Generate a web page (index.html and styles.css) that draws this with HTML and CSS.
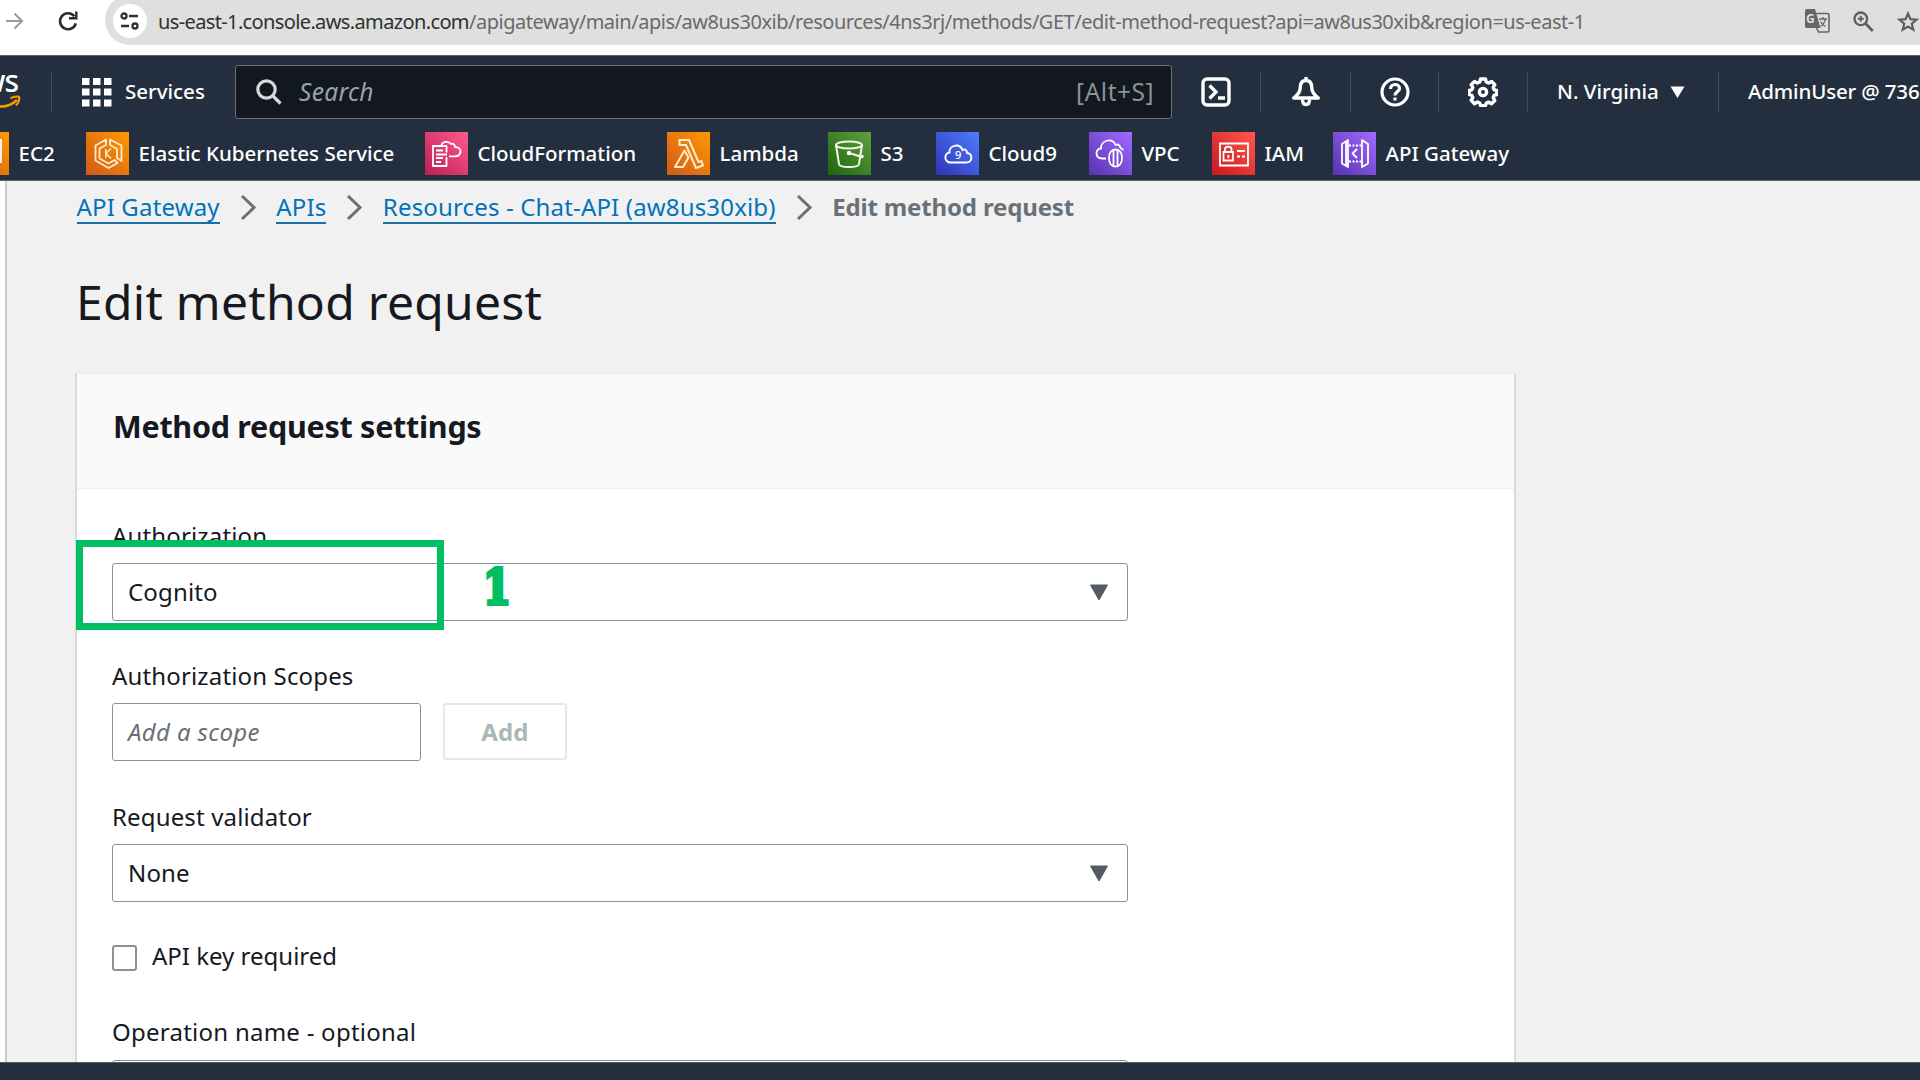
FILE: index.html
```html
<!DOCTYPE html>
<html lang="en">
<head>
<meta charset="utf-8">
<title>Edit method request - API Gateway</title>
<link rel="stylesheet" href="styles.css">
</head>
<body>
<div class="browser">
  <svg class="forward" width="18" height="18" viewBox="0 0 18 18" fill="none" stroke="#9b9b9b" stroke-width="2"><path d="M0 9h16M8.500 1.500L16 9l-7.500 7.500"/></svg>
  <svg class="reload" width="20" height="20" viewBox="0 0 20 20" fill="none" stroke="#2b2b2b" stroke-width="2.600"><path d="M16.300 5.200A8 8 0 1 0 17.800 12.300"/><path d="M18.300 .5V7.300H11" stroke-width="2.400"/></svg>
  <div class="omnibox">
    <span class="site-info"><svg width="20" height="18" viewBox="0 0 20 18" fill="none" stroke="#2f3033" stroke-width="2.300"><circle cx="4" cy="4" r="2.500"/><path d="M9 4h9M1 14h8"/><circle cx="15" cy="14" r="2.500"/></svg></span>
    <span class="url"><span class="host">us-east-1.console.aws.amazon.com</span>/apigateway/main/apis/aw8us30xib/resources/4ns3rj/methods/GET/edit-method-request?api=aw8us30xib&amp;region=us-east-1</span>
    <span class="omni-icons">
      <svg width="25" height="24" viewBox="0 0 25 24"><path d="M2 0h8l5.500 19H2a2 2 0 0 1-2-2V2a2 2 0 0 1 2-2z" fill="#666"/><path d="M11 4.500h11.500a1.500 1.500 0 0 1 1.500 1.500v15.500a1.500 1.500 0 0 1-1.500 1.500H13.500l-2-4" fill="none" stroke="#666" stroke-width="1.600"/><text x="1" y="14" font-size="12" font-weight="700" fill="#dfdfdf">G</text><path d="M14 10h8M18 8v2M20.500 10c-.5 3-3 6-5 7.500M15.500 12.500c1.500 3 3 4 5 5" fill="none" stroke="#666" stroke-width="1.300"/></svg>
      <svg width="21" height="21" viewBox="0 0 21 21" fill="none" stroke="#5f5f5f" stroke-width="2.300"><circle cx="7.800" cy="7.800" r="6.300"/><path d="M12.300 12.300L19.800 20" stroke-width="2.800"/><path d="M4.800 7.800h6M7.800 4.800v6" stroke-width="1.900"/></svg>
      <svg width="22" height="21" viewBox="0 0 22 21" fill="none" stroke="#5f5f5f" stroke-width="2.200"><path d="M11 2.500l2.400 5.700 6.100.5-4.700 4 1.500 6L11 15.500l-5.300 3.200 1.500-6-4.700-4 6.100-.5z"/></svg>
    </span>
  </div>
</div>

<header class="console-nav">
  <div class="nav-row">
    <div class="cell logo">
      <span class="aws-text">aws</span>
      <svg width="22" height="14" viewBox="0 0 22 14" fill="none" stroke="#f90" stroke-width="2.600"><path d="M0 11.500C6 12 12 9.500 17 5"/><path d="M10.500 3.200C14 1.500 17 1.200 19 1.900c.8 2.500-.5 6-3 8.600" stroke-width="2.200"/></svg>
    </div>
    <div class="cell services">
      <svg width="30" height="30" viewBox="0 0 30 30" fill="#fff"><path d="M0 1h7.500v7H0zM11 1h7.500v7H11zM22 1h7.500v7H22zM0 11.500h7.500v7H0zM11 11.500h7.500v7H11zM22 11.500h7.500v7H22zM0 22.500h7.500v7H0zM11 22.500h7.500v7H11zM22 22.500h7.500v7H22z"/></svg>
      <span>Services</span>
    </div>
    <div class="search">
      <svg width="26" height="26" viewBox="0 0 26 26" fill="none" stroke="#d5dbdb" stroke-width="3.200"><circle cx="10.500" cy="10.500" r="8.700"/><path d="M16.500 16.500L24.500 24.500"/></svg>
      <span class="search-text">Search</span><span class="search-key">[Alt+S]</span>
    </div>
    <div class="cell tool"><svg width="30" height="30" viewBox="0 0 30 30" fill="none" stroke="#fff" stroke-width="3.400"><rect x="2" y="2" width="26" height="26" rx="4"/><path d="M8.500 8.500l6.500 6.500-6.500 6.500M17 21h7"/></svg></div>
    <div class="cell tool"><svg width="30" height="30" viewBox="0 0 30 30" fill="none" stroke="#fff" stroke-width="3.400" stroke-linejoin="round"><path d="M15 3.500c-4.200 0-5.800 3.200-5.800 7.500 0 4.500-2.500 7-6.500 10h24.600c-4-3-6.500-5.500-6.500-10 0-4.300-1.600-7.500-5.800-7.500zM15 0v4"/><path d="M11.500 22.500c0 3.500 1.500 5 3.500 5s3.500-1.500 3.500-5"/></svg></div>
    <div class="cell tool"><svg width="30" height="30" viewBox="0 0 30 30" fill="none" stroke="#fff" stroke-width="3.200"><circle cx="15" cy="15" r="13"/><path d="M10.500 12c0-2.800 1.900-4.500 4.500-4.500s4.500 1.600 4.500 4c0 3-4.500 3.300-4.500 7"/><path d="M15 20.500v3"/></svg></div>
    <div class="cell tool"><svg width="30" height="30" viewBox="0 0 30 30" fill="none" stroke="#fff" stroke-width="3.400" stroke-linejoin="round"><path d="M12.500 2h5l.8 3 2.400 1 2.900-1.600 3.200 3.300L25.200 10.500l1 2.300 2.600.7v4l-2.700.8-.9 2.300 1.600 2.900-3.300 3.200-2.900-1.600-2.300 1-.8 2.500h-5l-.8-2.600-2.300-1-2.900 1.700-3.300-3.300 1.600-2.800-1-2.300-2.600-.8v-4l2.600-.7 1-2.300L3.200 7.700l3.300-3.300L9.300 6l2.400-1z"/><circle cx="15" cy="15" r="3.600"/></svg></div>
    <div class="cell region"><span>N. Virginia</span><svg width="15" height="12" viewBox="0 0 15 12"><path d="M.5 .5h14L7.500 12z" fill="#fff"/></svg></div>
    <div class="user">AdminUser @ 736</div>
  </div>

  <nav class="favorites">
    <a class="fav"><svg width="43" height="43" viewBox="0 0 43 43" class="clipped"><rect width="43" height="43" fill="url(#orange)"/><path d="M10 8h25v22H10" fill="none" stroke="#fff" stroke-width="1.800"/></svg><span>EC2</span></a>
    <a class="fav"><svg width="43" height="43" viewBox="0 0 43 43"><rect width="43" height="43" fill="url(#orange)"/><g fill="none" stroke="#ffe9cc" stroke-width="1.800" stroke-linejoin="round"><path d="M20 7.500L9.500 13.500v15L22.500 36l9-5-3-3-6 3.500-9-5V16.500l6.500-3.500z"/><path d="M24 7.500v5.500l7 4v9l4.500 3V13.500z"/><path d="M19.800 17v9M25 16.500l-5 5 5 5" stroke-width="1.500"/></g></svg><span>Elastic Kubernetes Service</span></a>
    <a class="fav"><svg width="43" height="43" viewBox="0 0 43 43"><rect width="43" height="43" fill="url(#pink)"/><g fill="none" stroke="#fff" stroke-width="1.800" stroke-linejoin="round"><path d="M16 14H8v20h13.500V25M11 18.500h7M11 22.500h11M11 26h7M11 30h5"/><path d="M21.500 20.500V14H16M16.500 13c1-3.500 7-4.500 9.500-1 2-1 4 .5 4 3 3.500 0 6 2 5.500 5-.5 3-3 4.300-5.500 4.300h-6"/></g></svg><span>CloudFormation</span></a>
    <a class="fav"><svg width="43" height="43" viewBox="0 0 43 43"><rect width="43" height="43" fill="url(#orange)"/><g fill="none" stroke="#ffebcf" stroke-width="2" stroke-linejoin="round"><path d="M12.500 8h9.500l9.500 22 3-1 1.500 4.500-7 2.500L19 13h-6.500z"/><path d="M17.500 18.500L8 35h8l5.500-9.500z"/></g></svg><span>Lambda</span></a>
    <a class="fav"><svg width="43" height="43" viewBox="0 0 43 43"><rect width="43" height="43" fill="url(#green)"/><g fill="none" stroke="#eef7e8" stroke-width="2"><ellipse cx="21" cy="13" rx="13" ry="3.500"/><path d="M8 13l3 19c.5 4 19.500 4 20 0L34 13M21 21l11.500 3.500"/></g><circle cx="21" cy="21" r="2.200" fill="#fff"/><circle cx="34" cy="24.500" r="1.800" fill="#fff"/></svg><span>S3</span></a>
    <a class="fav"><svg width="43" height="43" viewBox="0 0 43 43"><rect width="43" height="43" fill="url(#blue)"/><path d="M15 30.500c-7 0-7.500-9-1.500-10-1-7 10-10 13-2.500 2-1.500 4.500 0 4.500 3 6 .5 6 9.500-1 9.500z" fill="none" stroke="#fff" stroke-width="1.900"/><text x="19" y="27" font-size="11" fill="#fff">9</text></svg><span>Cloud9</span></a>
    <a class="fav"><svg width="43" height="43" viewBox="0 0 43 43"><rect width="43" height="43" fill="url(#purple)"/><g fill="none" stroke="#fff" stroke-width="1.800"><path d="M17 26.500h-3.500C5 26 6.500 16 12 16.500c-.5-8 11-11.500 14.500-3.500 2.500-1.500 4.500.5 5 3l3 2"/><path d="M26.500 17.500c4 0 6.500 3.500 6.500 8.500s-2.500 8.500-6.500 8.500-6.500-3.500-6.500-8.500 2.500-8.500 6.500-8.500zM24.500 18v16M28.500 18v16"/></g></svg><span>VPC</span></a>
    <a class="fav"><svg width="43" height="43" viewBox="0 0 43 43"><rect width="43" height="43" fill="url(#red)"/><g fill="none" stroke="#fff" stroke-width="1.800"><path d="M8 11.500h28v22H8zM11.500 20h9.500v8.500h-9.500zM13 20v-3c0-3 6.500-3 6.500 0v3M25 19h8M25 24.500h3M30 24.500h3M16.300 23v3"/></g></svg><span>IAM</span></a>
    <a class="fav"><svg width="43" height="43" viewBox="0 0 43 43"><rect width="43" height="43" fill="url(#purple)"/><g fill="none" stroke="#fff" stroke-width="1.800" stroke-linejoin="round"><path d="M15 8v27l-6-3.500V12zM15 11h-2v22h2M29 8v27l6-3.500V12z"/><path d="M16 13.500h12M16 29.500h12" stroke-dasharray="2 1.500"/><path d="M24 17l-4.500 4.500L24 26"/></g></svg><span>API Gateway</span></a>
  </nav>
  <svg class="defs" width="0" height="0"><defs>
    <linearGradient id="orange" x1="0" y1="1" x2="1" y2="0"><stop stop-color="#d05a18"/><stop offset="1" stop-color="#f90"/></linearGradient>
    <linearGradient id="pink" x1="0" y1="1" x2="1" y2="0"><stop stop-color="#bd1f56"/><stop offset="1" stop-color="#ff5a8c"/></linearGradient>
    <linearGradient id="green" x1="0" y1="1" x2="1" y2="0"><stop stop-color="#1b660f"/><stop offset="1" stop-color="#629f3c"/></linearGradient>
    <linearGradient id="blue" x1="0" y1="1" x2="1" y2="0"><stop stop-color="#3033b5"/><stop offset="1" stop-color="#4d7dff"/></linearGradient>
    <linearGradient id="purple" x1="0" y1="1" x2="1" y2="0"><stop stop-color="#5733b0"/><stop offset="1" stop-color="#a06bff"/></linearGradient>
    <linearGradient id="red" x1="0" y1="1" x2="1" y2="0"><stop stop-color="#c9161e"/><stop offset="1" stop-color="#ff5a4f"/></linearGradient>
  </defs></svg>
</header>

<div class="page">
  <div class="side-edge"></div>
  <main class="content">
    <nav class="crumbs">
      <a>API Gateway</a>
      <svg width="17" height="27" viewBox="0 0 17 27"><path d="M2 2l12 11.500L2 25" fill="none" stroke="#687078" stroke-width="3"/></svg>
      <a>APIs</a>
      <svg width="17" height="27" viewBox="0 0 17 27"><path d="M2 2l12 11.500L2 25" fill="none" stroke="#687078" stroke-width="3"/></svg>
      <a>Resources - Chat-API (aw8us30xib)</a>
      <svg width="17" height="27" viewBox="0 0 17 27"><path d="M2 2l12 11.500L2 25" fill="none" stroke="#687078" stroke-width="3"/></svg>
      <b>Edit method request</b>
    </nav>
    <h1>Edit method request</h1>
    <section class="card">
      <h2>Method request settings</h2>
      <div class="form">
        <label>Authorization</label>
        <div class="control select authorization"><span>Cognito</span><svg width="20" height="17" viewBox="0 0 20 17"><path d="M1.500 1h17L10 16z" fill="#545b64" stroke="#545b64" stroke-linejoin="round"/></svg>
          <span class="highlight"></span><span class="step">1</span>
        </div>
        <label>Authorization Scopes</label>
        <div class="scopes"><div class="control scope">Add a scope</div><div class="add">Add</div></div>
        <label>Request validator</label>
        <div class="control select"><span>None</span><svg width="20" height="17" viewBox="0 0 20 17"><path d="M1.500 1h17L10 16z" fill="#545b64" stroke="#545b64" stroke-linejoin="round"/></svg></div>
        <div class="check"><span class="box"></span>API key required</div>
        <label class="operation">Operation name - optional</label>
        <div class="control"></div>
      </div>
    </section>
  </main>
</div>
<footer class="footer"></footer>
</body>
</html>
```
FILE: styles.css
```css
* { box-sizing: border-box; }
body {
  margin: 0;
  width: 1920px;
  height: 1080px;
  overflow: hidden;
  display: flex;
  flex-direction: column;
  font: 24px/32px "Noto Sans", "Open Sans", sans-serif;
  color: #16191f;
  background: #fff;
}
svg { flex: none; display: block; }

/* Browser toolbar */
.browser { height: 55px; flex: none; display: flex; align-items: flex-start; padding-left: 6px; background: #fff; }
.forward { margin-top: 12px; }
.reload { margin: 11px 0 0 34px; }
.omnibox {
  flex: 1;
  height: 50px;
  margin: -5px 0 0 27px;
  padding: 2px 0 0 8px;
  border-radius: 25px 0 0 25px;
  background: #dfdfdf;
  display: flex;
  align-items: center;
}
.site-info { width: 34px; height: 34px; border-radius: 50%; background: #fff; display: flex; align-items: center; justify-content: center; }
.url { margin-left: 11px; padding-top: 2px; font-size: 20px; letter-spacing: -.47px; color: #6a6a6a; white-space: nowrap; }
.host { letter-spacing: -.63px; color: #303030; }
.omni-icons { flex: 1; display: flex; align-items: center; justify-content: flex-end; gap: 23px; margin-right: 1px; }

/* Console navigation */
.console-nav {
  height: 126px;
  flex: none;
  background: #232f3e;
  border-top: 1px solid #55606c;
  border-bottom: 1px solid #5c6570;
  color: #fff;
  font-size: 20.500px;
  font-weight: 500;
}
.nav-row { height: 71px; display: grid; grid-template-columns: 52px 183px 937px 89px 90px 88px 89px 191px 201px; align-items: center; }
.cell { height: 40px; display: flex; align-items: center; border-right: 1px solid #414d5c; }
.services { border-right: 0; padding-left: 30px; gap: 13px; }
.services span, .region span { padding-bottom: 2px; }
.logo { flex-direction: column; align-items: flex-start; justify-content: flex-start; }
.aws-text { font-size: 30px; line-height: 26px; height: 22px; width: 18px; display: flex; justify-content: flex-end; letter-spacing: -1px; margin-top: -4px; }
.logo svg { margin-top: 5px; }
.search {
  height: 54px;
  display: flex;
  align-items: center;
  padding: 0 17px 0 20px;
  border: 1px solid #687078;
  border-radius: 3px;
  background: #13171f;
  font-size: 24.500px;
  font-weight: 400;
  color: #95a5a6;
}
.search-text { margin-left: 17px; font-style: italic; letter-spacing: .3px; }
.search-key { margin-left: auto; letter-spacing: .5px; color: #879596; }
.tool { justify-content: center; }
.region { padding-left: 29px; gap: 11px; }
.user { padding: 0 0 2px 29px; white-space: nowrap; letter-spacing: -.15px; }
.favorites { display: grid; height: 53px; align-items: center; grid-template-columns: 86px 339px 242px 161px 108px 153px 123px 121px auto; }
.fav { display: flex; align-items: center; gap: 9.500px; white-space: nowrap; height: 43px; }
.fav span { padding-bottom: 2px; }
.clipped { margin-left: -34px; }
.defs { height: 0; }

/* Page */
.page { height: 881px; flex: none; display: flex; overflow: hidden; background: #f1f1f1; }
.side-edge { width: 7px; background: #fff; border-right: 2px solid #ccc; }
.content { width: 1440px; margin-left: 69px; display: flex; flex-direction: column; }
.crumbs { display: flex; align-items: center; gap: 20px; height: 32px; margin: 10px 0 0 .5px; white-space: nowrap; letter-spacing: .16px; }
.crumbs a { color: #0073bb; border-bottom: 2px solid #1a6fa5; height: 33px; }
.crumbs svg { margin-right: -.5px; }
.crumbs b { color: #687078; letter-spacing: -.15px; }
h1 { margin: 49px 0 0; font-size: 48px; line-height: 60px; font-weight: 400; letter-spacing: .28px; }
.card {
  flex: 1 0 720px;
  margin: 41px 0 0 -1px;
  background: #fff;
  border: solid;
  border-width: 1px 2px 0;
  border-color: #eaebeb #d9dada;
}
h2 { margin: 0; height: 115px; padding: 30px 36px 0; line-height: 44px; font-size: 30.500px; font-weight: 700; letter-spacing: -.28px; background: #fafafa; border-bottom: 1px solid #eee; }
.form { padding: 31px 35px 0; letter-spacing: .15px; }
label { display: block; height: 43px; }
.control { width: 1016px; height: 58px; border: 1.500px solid #8c9196; border-radius: 3px; background: #fff; padding: 0 15px; line-height: 56px; }
.select { display: flex; align-items: center; justify-content: space-between; padding-right: 18px; line-height: 32px; }
.select span:first-child { padding-bottom: 1px; }
.authorization { position: relative; margin-bottom: 39px; }
.scopes { margin-bottom: 40px; }
.highlight { position: absolute; left: -37px; top: -24px; width: 368px; height: 90px; border: 7px solid #00bf63; }
.step { position: absolute; left: 370px; top: -6px; font: 700 49px/58px "DejaVu Serif", serif; color: #00bf63; -webkit-text-stroke: 4px #00bf63; transform: scaleX(.82); transform-origin: left; }
.scopes { display: flex; gap: 22px; }
.scope { width: 309px; font-style: italic; color: #687078; letter-spacing: .35px; }
.add { width: 124px; height: 57px; border: 2px solid #e6e8e8; border-radius: 3px; text-align: center; font-weight: 700; line-height: 53px; color: #aab7b8; }
.check { display: flex; align-items: center; height: 32px; margin-top: 38px; letter-spacing: 0; }
.box { width: 25px; height: 26px; margin: 3px 15px 0 0; border: 2px solid #8c9196; border-radius: 3px; }
.operation { margin-top: 44px; height: 44px; letter-spacing: .25px; }

.footer { flex: 1; background: #232f3e; border-top: 1px solid #55606c; }
```
